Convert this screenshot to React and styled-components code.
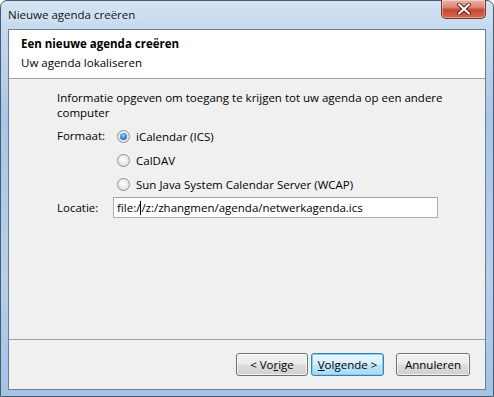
import React from 'react'
import styled, { createGlobalStyle } from 'styled-components'

const GlobalStyle = createGlobalStyle`
  html, body {
    margin: 0;
    padding: 0;
    background: #ffffff;
  }
  * {
    box-sizing: border-box;
  }
`

function Radio({ checked }) {
  return (
    <RadioCircle>
      {checked && <RadioDot />}
    </RadioCircle>
  )
}

function App() {
  return (
    <>
      <GlobalStyle />
      <Window>
        <TitleBar>
          <Title>Nieuwe agenda creëren</Title>
          <CloseButton>
            <svg width="14" height="12" viewBox="0 0 14 12">
              <path d="M2 1.5 L12 10.5 M12 1.5 L2 10.5" stroke="#5a1a10" strokeWidth="4" strokeLinecap="round" />
              <path d="M2 1.5 L12 10.5 M12 1.5 L2 10.5" stroke="#ffffff" strokeWidth="2.2" strokeLinecap="round" />
            </svg>
          </CloseButton>
        </TitleBar>
        <Client>
          <Header>
            <HeaderTitle>Een nieuwe agenda creëren</HeaderTitle>
            <HeaderSub>Uw agenda lokaliseren</HeaderSub>
          </Header>
          <Body>
            <Intro>Informatie opgeven om toegang te krijgen tot uw agenda op een andere computer</Intro>
            <FormRow>
              <Label>Formaat:</Label>
              <Options>
                <Option><Radio checked />iCalendar (ICS)</Option>
                <Option><Radio />CalDAV</Option>
                <Option><Radio />Sun Java System Calendar Server (WCAP)</Option>
              </Options>
            </FormRow>
            <LocationRow>
              <Label>Locatie:</Label>
              <Input>file:/<Caret />/z:/zhangmen/agenda/netwerkagenda.ics</Input>
            </LocationRow>
          </Body>
          <Footer>
            <Button $w={72}>&lt; Vo<u>r</u>ige</Button>
            <Button $w={73} $focused><u>V</u>olgende &gt;</Button>
            <Button $w={74} $gap>Annuleren</Button>
          </Footer>
        </Client>
      </Window>
    </>
  )
}

export default App

const Window = styled.div`
  width: 494px;
  height: 397px;
  display: flex;
  flex-direction: column;
  padding: 0 7px 6px 7px;
  border: 1px solid #4a5a6c;
  border-radius: 7px 7px 0 0;
  background: linear-gradient(180deg, #d3e3f3 0%, #c3d8ee 8%, #a9c6e6 30%, #b6d0ec 70%, #a4c2e4 100%);
  font-family: "Open Sans", "Noto Sans", sans-serif;
  font-size: 11.5px;
  color: #000;
`

const TitleBar = styled.div`
  height: 28px;
  display: flex;
  align-items: flex-start;
  flex-shrink: 0;
`

const Title = styled.div`
  padding-top: 6px;
  font-size: 11.5px;
  color: #111;
  text-shadow: 0 0 8px rgba(255, 255, 255, 0.9);
`

const CloseButton = styled.div`
  margin-left: auto;
  width: 45px;
  height: 19px;
  margin-top: -1px;
  border: 1px solid #6e3a30;
  border-top: none;
  border-radius: 0 0 5px 5px;
  background: linear-gradient(180deg, #eab3a6 0%, #dc8676 40%, #c6472f 55%, #d66a4c 100%);
  display: flex;
  align-items: center;
  justify-content: center;
  box-shadow: inset 0 0 0 1px rgba(255, 255, 255, 0.35);
`

const Client = styled.div`
  flex: 1;
  display: flex;
  flex-direction: column;
  background: #f0f0f0;
  border: 1px solid #6e7e90;
`

const Header = styled.div`
  background: #ffffff;
  height: 49px;
  padding: 5px 0 0 12px;
  border-bottom: 1px solid #a0a0a0;
`

const HeaderTitle = styled.div`
  font-weight: bold;
  line-height: 18px;
`

const HeaderSub = styled.div`
  line-height: 19px;
`

const Body = styled.div`
  flex: 1;
  padding: 11px 47px 0 48px;
`

const Intro = styled.div`
  line-height: 15px;
  width: 390px;
`

const FormRow = styled.div`
  display: flex;
  margin-top: 6px;
`

const Label = styled.div`
  width: 56px;
  flex-shrink: 0;
  line-height: 20px;
`

const Options = styled.div`
  display: flex;
  flex-direction: column;
  gap: 3px;
`

const Option = styled.div`
  display: flex;
  align-items: center;
  gap: 6px;
  height: 21px;
  line-height: 20px;
`

const RadioCircle = styled.span`
  width: 13px;
  height: 13px;
  border-radius: 50%;
  border: 1px solid #8e8f8f;
  background: radial-gradient(circle at 50% 40%, #ffffff 0%, #e8e8e8 60%, #cfcfcf 100%);
  display: flex;
  align-items: center;
  justify-content: center;
  margin-left: 4px;
`

const RadioDot = styled.span`
  width: 7px;
  height: 7px;
  border-radius: 50%;
  background: radial-gradient(circle at 45% 35%, #9fd8ff 0%, #2f8ad8 50%, #174e9a 100%);
`

const LocationRow = styled.div`
  display: flex;
  align-items: center;
  margin-top: 2px;
`

const Input = styled.div`
  width: 327px;
  height: 21px;
  border: 1px solid #abadb3;
  border-top-color: #a0a3aa;
  background: #ffffff;
  padding-left: 3px;
  line-height: 19px;
  display: flex;
  align-items: center;
  white-space: nowrap;
`

const Caret = styled.span`
  display: inline-block;
  width: 1px;
  height: 14px;
  background: #000;
`

const Footer = styled.div`
  height: 50px;
  border-top: 1px solid #a0a0a0;
  display: flex;
  justify-content: flex-end;
  align-items: flex-start;
  gap: 3px;
  padding: 13px 15px 0 0;
`

const Button = styled.div`
  width: ${p => p.$w}px;
  height: 23px;
  margin-left: ${p => (p.$gap ? '9px' : '0')};
  border: 1px solid ${p => (p.$focused ? '#3c7fb1' : '#707070')};
  border-radius: 3px;
  background: ${p => (p.$focused
    ? 'linear-gradient(180deg, #eaf6fd 0%, #d9f0fc 48%, #bee6fd 52%, #a7d9f5 100%)'
    : 'linear-gradient(180deg, #f2f2f2 0%, #ebebeb 48%, #dddddd 52%, #cfcfcf 100%)')};
  box-shadow: inset 0 0 0 1px ${p => (p.$focused ? '#7fd0f6' : 'rgba(255,255,255,0.7)')};
  display: flex;
  align-items: center;
  justify-content: center;
  line-height: 20px;
  & u {
    text-decoration: underline;
  }
`
